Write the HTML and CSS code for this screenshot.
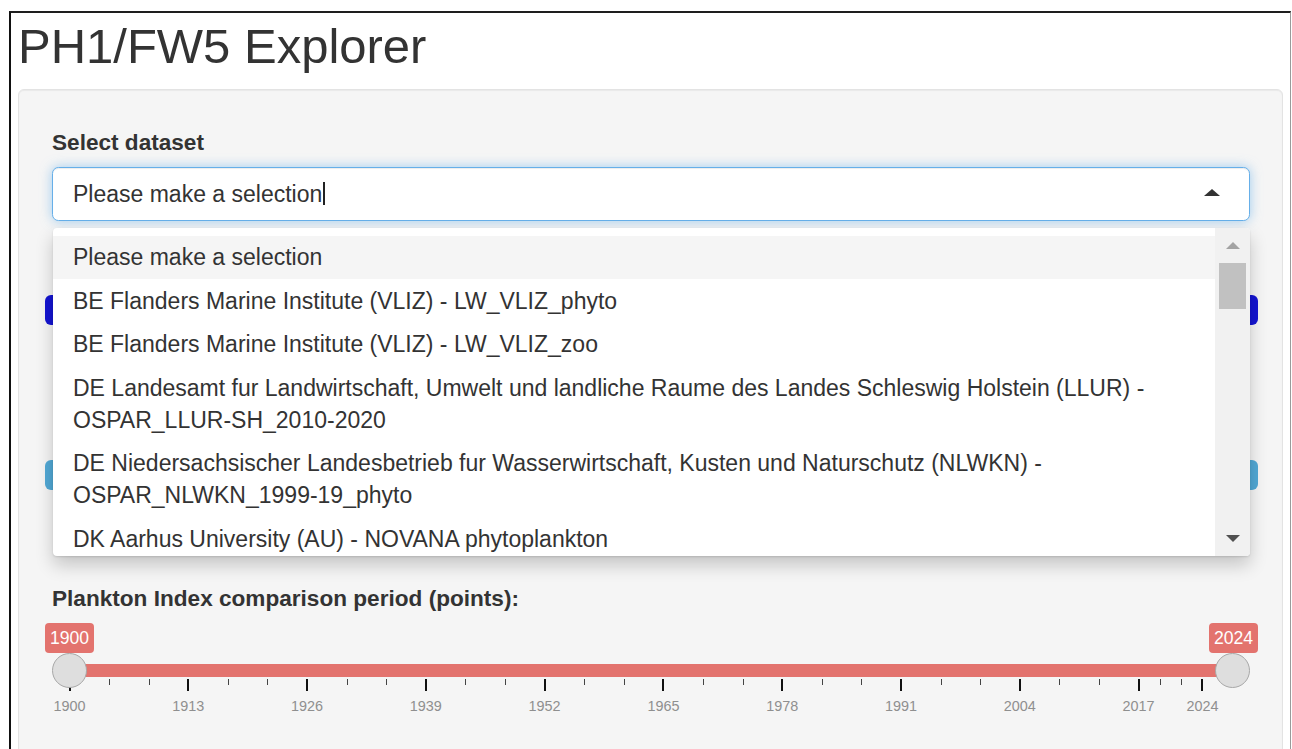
FILE: index.html
```html
<!DOCTYPE html>
<html lang="en">
<head>
<meta charset="utf-8">
<title>PH1/FW5 Explorer</title>
<link rel="stylesheet" href="styles.css">
</head>
<body>
<div class="frame">
  <h2 class="title">PH1/FW5 Explorer</h2>
  <div class="well">
    <div class="form-group">
      <label class="control-label">Select dataset</label>
      <div class="selectize">
        <div class="selectize-input">
          <span class="value">Please make a selection</span><span class="text-caret"></span>
          <span class="caret-up"></span>
        </div>
        <div class="selectize-dropdown">
          <div class="options">
            <div class="option active">Please make a selection</div>
            <div class="option">BE Flanders Marine Institute (VLIZ) - LW_VLIZ_phyto</div>
            <div class="option">BE Flanders Marine Institute (VLIZ) - LW_VLIZ_zoo</div>
            <div class="option">DE Landesamt fur Landwirtschaft, Umwelt und landliche Raume des Landes Schleswig Holstein (LLUR) - OSPAR_LLUR-SH_2010-2020</div>
            <div class="option">DE Niedersachsischer Landesbetrieb fur Wasserwirtschaft, Kusten und Naturschutz (NLWKN) - OSPAR_NLWKN_1999-19_phyto</div>
            <div class="option">DK Aarhus University (AU) - NOVANA phytoplankton</div>
          </div>
          <div class="scrollbar">
            <div class="sb-button"><span class="sb-arrow up"></span></div>
            <div class="sb-track"><div class="sb-thumb"></div></div>
            <div class="sb-button"><span class="sb-arrow down"></span></div>
          </div>
        </div>
      </div>
    </div>

    <div class="btn btn-primary"></div>
    <div class="btn btn-info"></div>

    <div class="form-group slider-group">
      <label class="control-label">Plankton Index comparison period (points):</label>
      <div class="slider">
        <div class="slider-values">
          <span class="slider-value">1900</span>
          <span class="slider-value">2024</span>
        </div>
        <div class="slider-line">
          <span class="handle"></span>
          <span class="bar"></span>
          <span class="handle"></span>
        </div>
        <div class="grid">
          <div class="cell"><div class="sub"><i class="tick major"></i><span class="grid-text">1900</span></div><div class="sub"><i class="tick"></i></div><div class="sub"><i class="tick"></i></div></div>
          <div class="cell"><div class="sub"><i class="tick major"></i><span class="grid-text">1913</span></div><div class="sub"><i class="tick"></i></div><div class="sub"><i class="tick"></i></div></div>
          <div class="cell"><div class="sub"><i class="tick major"></i><span class="grid-text">1926</span></div><div class="sub"><i class="tick"></i></div><div class="sub"><i class="tick"></i></div></div>
          <div class="cell"><div class="sub"><i class="tick major"></i><span class="grid-text">1939</span></div><div class="sub"><i class="tick"></i></div><div class="sub"><i class="tick"></i></div></div>
          <div class="cell"><div class="sub"><i class="tick major"></i><span class="grid-text">1952</span></div><div class="sub"><i class="tick"></i></div><div class="sub"><i class="tick"></i></div></div>
          <div class="cell"><div class="sub"><i class="tick major"></i><span class="grid-text">1965</span></div><div class="sub"><i class="tick"></i></div><div class="sub"><i class="tick"></i></div></div>
          <div class="cell"><div class="sub"><i class="tick major"></i><span class="grid-text">1978</span></div><div class="sub"><i class="tick"></i></div><div class="sub"><i class="tick"></i></div></div>
          <div class="cell"><div class="sub"><i class="tick major"></i><span class="grid-text">1991</span></div><div class="sub"><i class="tick"></i></div><div class="sub"><i class="tick"></i></div></div>
          <div class="cell"><div class="sub"><i class="tick major"></i><span class="grid-text">2004</span></div><div class="sub"><i class="tick"></i></div><div class="sub"><i class="tick"></i></div></div>
          <div class="cell short"><div class="sub"><i class="tick major"></i><span class="grid-text">2017</span></div><div class="sub"><i class="tick"></i></div><div class="sub"><i class="tick"></i></div></div>
          <div class="cell end"><div class="sub"><i class="tick major"></i><span class="grid-text">2024</span></div></div>
        </div>
      </div>
    </div>
  </div>
</div>
</body>
</html>
```

FILE: styles.css
```css
html, body {
  margin: 0;
  padding: 0;
  background: #ffffff;
}

body {
  font-family: "Liberation Sans", Arial, sans-serif;
  color: #333333;
  font-size: 23px;
  line-height: 32px;
}

/* outer page frame */
.frame {
  margin: 11px 0 0 9px;
  width: 1282px;
  height: 760px;
  border-top: 2px solid #1e1e1e;
  border-left: 2px solid #111111;
  border-right: 1px solid #9a9a9a;
  padding: 0 7px;
  box-sizing: border-box;
  overflow: hidden;
}

.title {
  margin: 7px 0 16px;
  font-size: 49px;
  font-weight: 500;
  line-height: 52.8px;
  color: #333333;
}

/* sidebar well */
.well {
  background: #f5f5f5;
  border: 1px solid #e3e3e3;
  border-radius: 6px;
  box-shadow: inset 0 1px 1px rgba(0, 0, 0, 0.05);
  padding: 37px 32px 60px 33px;
  min-height: 700px;
}

.form-group {
  display: flex;
  flex-direction: column;
}

.control-label {
  font-size: 22.6px;
  font-weight: 700;
  margin-bottom: 8px;
}

/* selectize input */
.selectize {
  position: relative;
}

.selectize-input {
  display: flex;
  align-items: center;
  height: 54.4px;
  box-sizing: border-box;
  padding: 0 0 0 20px;
  background: #ffffff;
  border: 1px solid #66afe9;
  border-radius: 6.4px;
  box-shadow: inset 0 1px 1px rgba(0, 0, 0, 0.075), 0 0 12px rgba(102, 175, 233, 0.6);
}

.value {
  color: #333333;
}

.text-caret {
  width: 1.5px;
  height: 23px;
  background: #222222;
  margin-left: 1px;
}

.caret-up {
  margin-left: auto;
  margin-right: 29px;
  margin-top: -3px;
  width: 0;
  height: 0;
  border-left: 8px solid transparent;
  border-right: 8px solid transparent;
  border-bottom: 7px solid #333333;
}

/* open dropdown menu */
.selectize-dropdown {
  position: absolute;
  top: calc(100% + 6.5px);
  left: 1px;
  right: 0;
  height: 328px;
  z-index: 10;
  display: flex;
  background: #ffffff;
  border-radius: 4px;
  box-shadow: 0 1px 2px rgba(0, 0, 0, 0.12), 0 9px 18px rgba(0, 0, 0, 0.2);
  overflow: hidden;
}

.options {
  flex: 1;
  padding-top: 8px;
  overflow: hidden;
}

.option {
  padding: 5.75px 40px 5.75px 20px;
  color: #333333;
}

.option.active {
  background: #f5f5f5;
}

.scrollbar {
  width: 35px;
  display: flex;
  flex-direction: column;
  background: #f1f1f1;
}

.sb-button {
  height: 35px;
  display: flex;
  align-items: center;
  justify-content: center;
}

.sb-arrow {
  width: 0;
  height: 0;
  border-left: 7px solid transparent;
  border-right: 7px solid transparent;
}

.sb-arrow.up {
  border-bottom: 7px solid #a3a3a3;
  margin-top: 1px;
}

.sb-arrow.down {
  border-top: 7px solid #505050;
  margin-top: 1px;
}

.sb-track {
  flex: 1;
  padding: 0 4px;
}

.sb-thumb {
  height: 46px;
  background: #c1c1c1;
}

/* buttons lying under the open menu */
.btn {
  margin: 0 -8px 0 -7px;
  height: 30px;
  border-radius: 6px;
}

.btn-primary {
  margin-top: 74px;
  background: #1414d2;
}

.btn-info {
  margin-top: 135px;
  background: #52a9d6;
}

.slider-group {
  margin-top: 93px;
}

/* range slider */
.slider-values {
  display: flex;
  justify-content: space-between;
  margin: 0 -8px 0 -7px;
}

.slider-value {
  width: 49px;
  height: 30px;
  box-sizing: border-box;
  background: #e3736e;
  color: #ffffff;
  border-radius: 4px;
  font-size: 17.6px;
  line-height: 30px;
  text-align: center;
}

.slider-line {
  display: flex;
  align-items: center;
  height: 35px;
}

.handle {
  position: relative;
  z-index: 2;
  flex: 0 0 35px;
  height: 35px;
  box-sizing: border-box;
  border-radius: 50%;
  background: #dedede;
  border: 1.5px solid #a8a8a8;
}

.bar {
  flex: 1;
  height: 13px;
  margin: 0 -17.5px;
  background: #e3736e;
}

.grid {
  display: flex;
  margin-top: -9px;
  padding: 0 17.5px;
}

.cell {
  flex: 13 1 0;
  display: flex;
}

.cell.short {
  flex: 7 1 0;
}

.cell.end {
  flex: 0 0 0;
}

.sub {
  flex: 1 1 0;
  min-width: 0;
  display: flex;
  flex-direction: column;
  align-items: flex-start;
}

.tick {
  display: block;
  width: 1px;
  height: 6px;
  background: #444444;
}

.tick.major {
  width: 2px;
  height: 12px;
  margin-left: -1px;
  background: #111111;
}

.grid-text {
  width: 60px;
  margin-left: -30px;
  margin-top: 7px;
  text-align: center;
  font-size: 14.4px;
  line-height: 16px;
  color: #8f8f8f;
}
```
